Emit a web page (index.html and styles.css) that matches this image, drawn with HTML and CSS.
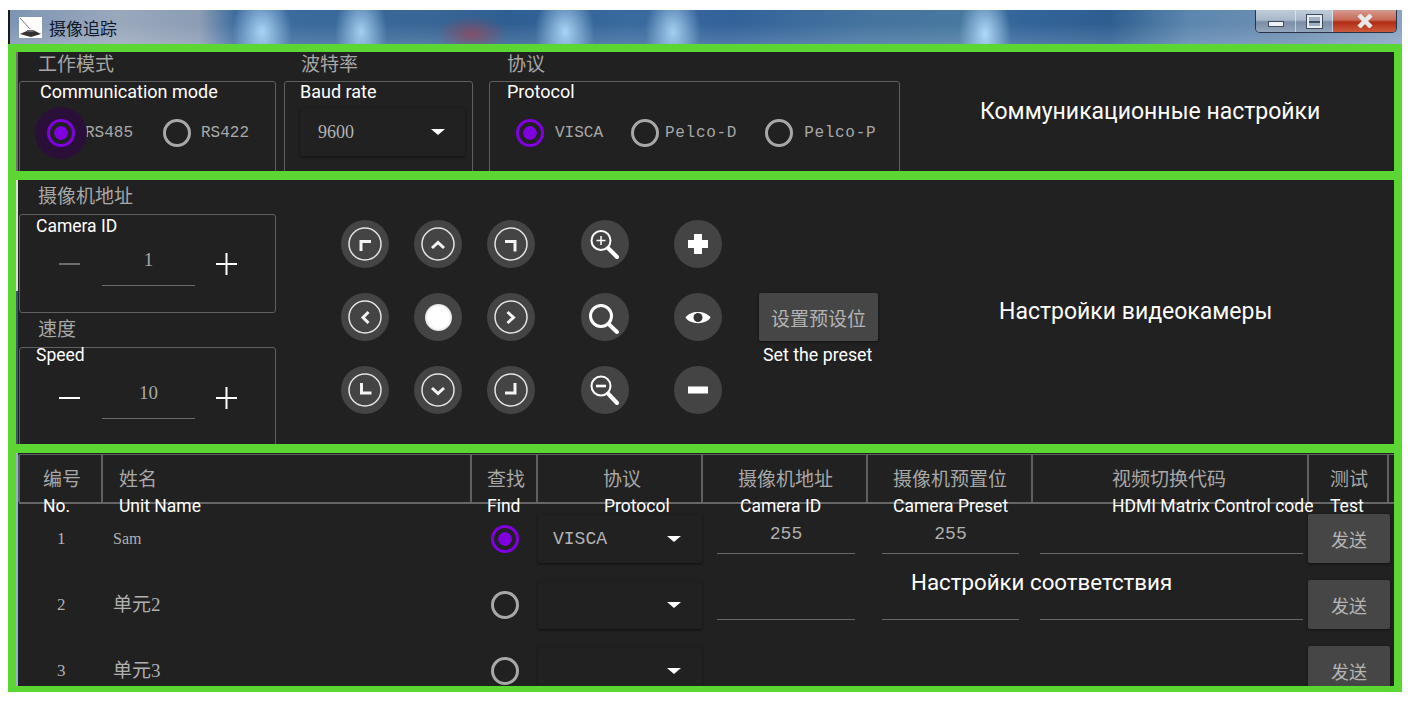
FILE: index.html
```html
<!DOCTYPE html>
<html lang="zh">
<head>
  <meta charset="UTF-8">
  <meta name="viewport" content="width=device-width, initial-scale=1.0">
  <title>摄像追踪</title>
  <link rel="stylesheet" href="styles.css">
</head>
<body>
  <div class="window">
    <div class="titlebar">
      <div class="app-icon">
        <svg width="23" height="21" viewBox="0 0 23 21">
          <path d="M1 1 L11 12" stroke="#777" stroke-width="1" fill="none"/>
          <path d="M1 17 L10 13 L14 13 L22 17 L12 20 Z" fill="#333"/>
          <path d="M8 13 L15 13 L15 15 L8 15 Z" fill="#666"/>
        </svg>
      </div>
      <span class="app-title">摄像追踪</span>
      <div class="win-btns">
        <div class="win-btn win-min"><i></i></div>
        <div class="win-btn win-max"><i></i></div>
        <div class="win-btn win-close">
          <svg width="26" height="14" viewBox="0 0 26 14"><path d="M7 1 L19 13 M19 1 L7 13" stroke="#e8e8e8" stroke-width="4.5" fill="none"/></svg>
        </div>
      </div>
    </div>

    <div class="frame">
      <!-- communication -->
      <section class="panel panel-comm">
        <div class="group group-mode">
          <div class="group-label">工作模式</div>
          <div class="box">
            <div class="caption">Communication mode</div>
            <div class="radios">
              <span class="radio on halo"></span><span class="radio-text text-485">RS485</span>
              <span class="radio"></span><span class="radio-text">RS422</span>
            </div>
          </div>
        </div>
        <div class="group group-baud">
          <div class="group-label">波特率</div>
          <div class="box">
            <div class="caption">Baud rate</div>
            <div class="select select-baud"><span>9600</span><i class="caret"></i></div>
          </div>
        </div>
        <div class="group group-proto">
          <div class="group-label">协议</div>
          <div class="box">
            <div class="caption">Protocol</div>
            <div class="radios radios-proto">
              <span class="radio on"></span><span class="radio-text text-visca">VISCA</span>
              <span class="radio"></span><span class="radio-text text-pelco-d">Pelco-D</span>
              <span class="radio"></span><span class="radio-text text-pelco-p">Pelco-P</span>
            </div>
          </div>
        </div>
        <div class="note note-comm">Коммуникационные настройки</div>
      </section>

      <!-- camera -->
      <section class="panel panel-cam">
        <div class="cam-left">
          <div class="group-label">摄像机地址</div>
          <div class="box box-step">
            <div class="caption">Camera ID</div>
            <div class="stepper">
              <svg class="step-icon" width="22" height="22" viewBox="0 0 22 22"><path d="M0 11 H21" stroke="#6e6e6e" stroke-width="2"/></svg>
              <div class="step-value">1</div>
              <svg class="step-icon" width="22" height="22" viewBox="0 0 22 22"><path d="M0 11 H21 M10.5 0 V22" stroke="#fff" stroke-width="2"/></svg>
            </div>
          </div>
          <div class="group-label label-speed">速度</div>
          <div class="box box-step box-open">
            <div class="caption caption-speed">Speed</div>
            <div class="stepper">
              <svg class="step-icon" width="22" height="22" viewBox="0 0 22 22"><path d="M0 11 H21" stroke="#fff" stroke-width="2"/></svg>
              <div class="step-value">10</div>
              <svg class="step-icon" width="22" height="22" viewBox="0 0 22 22"><path d="M0 11 H21 M10.5 0 V22" stroke="#fff" stroke-width="2"/></svg>
            </div>
          </div>
        </div>

        <div class="pad">
          <div class="pad-btn"><svg viewBox="0 0 48 48"><circle class="ring" cx="24" cy="24" r="16"/><path class="arrow" d="M20 31 V21.5 H30"/></svg></div>
          <div class="pad-btn"><svg viewBox="0 0 48 48"><circle class="ring" cx="24" cy="24" r="16"/><path class="arrow" d="M18 28 L24 22.5 L30 28"/></svg></div>
          <div class="pad-btn"><svg viewBox="0 0 48 48"><circle class="ring" cx="24" cy="24" r="16"/><path class="arrow" d="M18 21.5 H28 V31.5"/></svg></div>
          <div class="pad-btn"><svg viewBox="0 0 48 48"><circle cx="20" cy="20.5" r="9.5" class="lens"/><path class="lens-thin" d="M15.5 20.5 H24.5 M20 16 V25"/><path class="handle" d="M27 28 L36 37"/></svg></div>
          <div class="pad-btn"><svg viewBox="0 0 48 48"><path fill="#fff" d="M20 14 H28 V20 H34 V28 H28 V34 H20 V28 H14 V20 H20 Z"/></svg></div>

          <div class="pad-btn"><svg viewBox="0 0 48 48"><circle class="ring" cx="24" cy="24" r="16"/><path class="arrow" d="M27.5 19 L22 24.5 L27.5 30"/></svg></div>
          <div class="pad-btn"><div class="home-dot"></div></div>
          <div class="pad-btn"><svg viewBox="0 0 48 48"><circle class="ring" cx="24" cy="24" r="16"/><path class="arrow" d="M20.5 19 L26.5 24.5 L20.5 30"/></svg></div>
          <div class="pad-btn"><svg viewBox="0 0 48 48"><circle cx="20" cy="23" r="10.5" class="lens lens-bold"/><path class="handle" d="M27.5 31 L36 39"/></svg></div>
          <div class="pad-btn"><svg viewBox="0 0 48 48"><path fill="#fff" d="M11.5 24.5 C16 17 32 17 36.5 24.5 C32 32 16 32 11.5 24.5 Z"/><circle cx="24" cy="24.5" r="4.5" fill="#333"/></svg></div>

          <div class="pad-btn"><svg viewBox="0 0 48 48"><circle class="ring" cx="24" cy="24" r="16"/><path class="arrow" d="M20.5 17 V27 H30.5"/></svg></div>
          <div class="pad-btn"><svg viewBox="0 0 48 48"><circle class="ring" cx="24" cy="24" r="16"/><path class="arrow" d="M18 22 L24 27.5 L30 22"/></svg></div>
          <div class="pad-btn"><svg viewBox="0 0 48 48"><circle class="ring" cx="24" cy="24" r="16"/><path class="arrow" d="M28 17 V27 H18"/></svg></div>
          <div class="pad-btn"><svg viewBox="0 0 48 48"><circle cx="20" cy="20" r="9.5" class="lens"/><path class="lens-bar" d="M15 20 H25"/><path class="handle" d="M27 27.5 L36 37"/></svg></div>
          <div class="pad-btn"><svg viewBox="0 0 48 48"><rect x="14" y="20.5" width="20" height="7" fill="#fff"/></svg></div>
        </div>

        <div class="preset">
          <div class="btn preset-btn">设置预设位</div>
          <div class="preset-text">Set the preset</div>
        </div>
        <div class="note note-cam">Настройки видеокамеры</div>
      </section>

      <!-- matching table -->
      <section class="panel panel-map">
        <div class="grid head">
          <div class="th th-no"><b>编号</b><span>No.</span></div>
          <div class="th th-name"><b>姓名</b><span>Unit Name</span></div>
          <div class="th th-find"><b>查找</b><span>Find</span></div>
          <div class="th th-proto"><b>协议</b><span>Protocol</span></div>
          <div class="th th-id"><b>摄像机地址</b><span>Camera ID</span></div>
          <div class="th th-preset"><b>摄像机预置位</b><span>Camera Preset</span></div>
          <div class="th th-hdmi"><b>视频切换代码</b><span>HDMI Matrix Control code</span></div>
          <div class="th th-test"><b>测试</b><span>Test</span></div>
        </div>

        <div class="grid row">
          <div class="td td-no">1</div>
          <div class="td td-name">Sam</div>
          <div class="td td-find"><span class="radio on"></span></div>
          <div class="td"><div class="select select-row"><span>VISCA</span><i class="caret"></i></div></div>
          <div class="td"><div class="field field-id">255</div></div>
          <div class="td"><div class="field field-preset">255</div></div>
          <div class="td"><div class="field field-hdmi"></div></div>
          <div class="td"><div class="btn send-btn">发送</div></div>
        </div>
        <div class="grid row">
          <div class="td td-no">2</div>
          <div class="td td-name td-name-cn">单元2</div>
          <div class="td td-find"><span class="radio"></span></div>
          <div class="td"><div class="select select-row"><span></span><i class="caret"></i></div></div>
          <div class="td"><div class="field field-id"></div></div>
          <div class="td"><div class="field field-preset"></div></div>
          <div class="td"><div class="field field-hdmi"></div></div>
          <div class="td"><div class="btn send-btn">发送</div></div>
        </div>
        <div class="grid row">
          <div class="td td-no">3</div>
          <div class="td td-name td-name-cn">单元3</div>
          <div class="td td-find"><span class="radio"></span></div>
          <div class="td"><div class="select select-row"><span></span><i class="caret"></i></div></div>
          <div class="td"></div>
          <div class="td"></div>
          <div class="td"></div>
          <div class="td"><div class="btn send-btn">发送</div></div>
        </div>

        <div class="note note-map">Настройки соответствия</div>
      </section>
    </div>
  </div>
</body>
</html>
```

FILE: styles.css
```css
*{
  margin: 0px;
  padding: 0px;
  box-sizing: border-box;
}
body{
  background: #fff;
  font-family: "Roboto", "Noto Sans CJK SC", sans-serif;
  overflow: hidden;
}
.window{
  width: 1394px;
  margin: 10px 0 0 8px;
}

/* title bar */
.titlebar{
  height: 34px;
  display: flex;
  align-items: center;
  position: relative;
  border-left: 2px solid #1a1a1a;
  padding-left: 9px;
  background:
    radial-gradient(ellipse 30px 42px at 252px 22px, #a9d3f5 0%, rgba(169,211,245,0) 100%),
    radial-gradient(ellipse 26px 42px at 351px 22px, #a5cff0 0%, rgba(165,207,240,0) 100%),
    radial-gradient(ellipse 36px 18px at 462px 24px, rgba(170,60,70,.6) 0%, rgba(170,60,70,0) 100%),
    radial-gradient(ellipse 30px 42px at 555px 22px, #a9d3f5 0%, rgba(169,211,245,0) 100%),
    radial-gradient(ellipse 28px 42px at 663px 22px, #a5cff0 0%, rgba(165,207,240,0) 100%),
    radial-gradient(ellipse 26px 44px at 975px 24px, #b0d8f8 0%, rgba(176,216,248,0) 100%),
    linear-gradient(180deg, rgba(255,255,255,0) 40%, rgba(255,255,255,.14) 100%),
    linear-gradient(90deg, #7d95b3 0px, #9aa8bc 110px, #8b9cb4 190px, #3f6d9f 225px, #3a6a9c 300px, #386696 420px, #2f5f92 500px, #3a6b9e 620px, #33629a 720px, #44739f 850px, #48789f 950px, #34659a 1010px, #2e5e90 1100px, #5d87af 1180px, #6f90b3 1290px, #8ba4c2 1394px);
}
.app-icon{
  width: 23px;
  height: 21px;
  background: #fff;
  display: flex;
}
.app-title{
  margin-left: 7px;
  font-size: 17px;
  color: #10182a;
}
.win-btns{
  position: absolute;
  top: 0;
  right: 5px;
  width: 142px;
  height: 23px;
  display: flex;
  border: 1px solid #2a3345;
  border-top: none;
  border-radius: 0 0 5px 5px;
  overflow: hidden;
}
.win-btn{
  display: flex;
  align-items: center;
  justify-content: center;
  border-right: 1px solid rgba(255,255,255,.5);
  background: linear-gradient(180deg, #c0ccd9 0%, #a9b8cb 45%, #7c8ea5 55%, #93a5ba 100%);
}
.win-min{
  width: 40px;
}
.win-min i{
  display: block;
  width: 16px;
  height: 6px;
  margin-top: 6px;
  background: #eef1f5;
  border: 1px solid #3d4a5c;
}
.win-max{
  width: 37px;
}
.win-max i{
  display: block;
  width: 15px;
  height: 13px;
  border: 2px solid #e8ecf1;
  outline: 1px solid #3d4a5c;
  background: linear-gradient(180deg, #9fb0c4 0 4px, #3d4a5c 4px 6px, #9fb0c4 6px);
}
.win-close{
  flex: 1;
  border-right: none;
  background: linear-gradient(180deg, #d69a8e 0%, #c76a58 45%, #b02c12 55%, #cc5b3d 100%);
}

/* green frame round the panels */
.frame{
  background: #5cd632;
  padding: 8px 8px 6px;
  height: 648px;
  display: flex;
  flex-direction: column;
  gap: 9px;
}
.panel{
  background: #212121;
  overflow: hidden;
  position: relative;
  color: #fff;
}
.panel-comm{
  height: 119px;
  display: flex;
  padding-left: 3px;
  box-shadow: inset 2px 0 0 #6f6f6f;
}
.panel-cam{
  height: 264px;
  display: flex;
  padding-left: 3px;
  background: #212121 linear-gradient(180deg, #dcdcdc 111px, #35586c 111px) no-repeat 0 0 / 2px 100%;
}
.panel-map{
  height: 233px;
  padding-left: 3px;
  box-shadow: inset 2px 0 0 #8fb4cc;
}

/* groups */
.group-label{
  height: 29px;
  line-height: 25px;
  padding-left: 19px;
  font-size: 19px;
  color: #a8a8a8;
}
.box{
  height: 99px;
  border: 1px solid #606060;
  border-radius: 3px;
}
.caption{
  height: 20px;
  line-height: 20px;
  padding-left: 20px;
  font-size: 18px;
  color: #fff;
}
.group-mode{
  width: 257px;
  margin-right: 8px;
}
.group-baud{
  width: 189px;
  margin-right: 16px;
}
.group-baud .group-label{
  padding-left: 17px;
}
.group-baud .caption{
  padding-left: 15px;
}
.group-proto{
  width: 411px;
}
.group-proto .group-label{
  padding-left: 18px;
}
.group-proto .caption{
  padding-left: 17px;
}

/* radios */
.radios{
  display: flex;
  align-items: center;
  height: 42px;
  margin-top: 10px;
  padding-left: 27px;
}
.radio{
  display: block;
  width: 28px;
  height: 28px;
  border: 3px solid #a8a8a8;
  border-radius: 50%;
  flex: none;
  position: relative;
  background: transparent;
}
.radio.on{
  border-color: #8000e0;
  background: radial-gradient(circle, #8000e0 0 6.5px, transparent 7px);
}
.halo{
  box-shadow: 0 0 0 12px #2a1038;
}
.radio-text{
  font-family: "Liberation Mono", "Noto Sans CJK SC", monospace;
  font-size: 16px;
  color: #a8a8a8;
  margin-left: 10px;
}
.text-485{
  margin-right: 30px;
}
.radios-proto{
  padding-left: 26px;
}
.radios-proto .radio-text{
  margin-left: 11px;
}
.text-visca{
  margin-right: 28px;
}
.radios-proto .text-pelco-d{
  margin-left: 6px;
  margin-right: 28px;
  letter-spacing: 0.7px;
}
.text-pelco-p{
  letter-spacing: 0.7px;
}

/* selects */
.select{
  display: flex;
  align-items: center;
  justify-content: space-between;
  background: #212121;
  box-shadow: 0 1px 3px rgba(0,0,0,.55);
  border-radius: 2px;
}
.select span{
  font-family: "Liberation Mono", "Noto Sans CJK SC", monospace;
  color: #b4b4b4;
}
.caret{
  display: block;
  width: 0;
  height: 0;
  border-left: 7px solid transparent;
  border-right: 7px solid transparent;
  border-top: 6px solid #fff;
}
.select-baud{
  width: 165px;
  height: 48px;
  margin: 6px 0 0 15px;
  padding: 0 20px 0 18px;
}
.select-baud span{
  font-size: 18px;
  font-family: "Liberation Serif", serif;
}
.select-row{
  width: 164px;
  height: 48px;
  margin: 9px 0 0 1px;
  padding: 0 21px 0 15px;
}
.select-row span{
  font-size: 18px;
}

/* notes */
.note{
  font-size: 23px;
  color: #fff;
  white-space: nowrap;
}
.note-comm{
  margin: 46px 0 0 80px;
}
.note-cam{
  margin: 118px 0 0 121px;
}
.note-map{
  position: absolute;
  left: 895px;
  top: 116px;
  font-size: 22.3px;
}

/* camera panel */
.cam-left{
  width: 257px;
}
.cam-left .group-label{
  height: 34px;
  line-height: 34px;
}
.box-step .caption{
  padding-left: 16px;
  font-size: 17.5px;
}
.box-step > .caption:not(.caption-speed){
  padding-top: 1px;
}
.box-open{
  height: 110px;
}
.caption-speed{
  height: 16px;
  line-height: 14px;
}
.stepper{
  display: flex;
  align-items: flex-start;
  margin-top: 8px;
  padding-left: 39px;
}
.box-open .stepper{
  margin-top: 16px;
}
.step-icon{
  flex: none;
  margin-top: 10px;
}
.box-open .step-icon{
  margin-top: 7px;
}
.step-value{
  width: 93px;
  height: 43px;
  margin: 0 21px;
  border-bottom: 1px solid #6a6a6a;
  text-align: center;
  font-family: "Liberation Serif", serif;
  font-size: 19px;
  line-height: 34px;
  color: #a8a8a8;
}
.box-open .step-value{
  height: 39px;
  line-height: 26px;
}
.pad{
  display: grid;
  grid-template-columns: 48px 48px 48px 69px 68px;
  grid-auto-rows: 48px;
  gap: 25px;
  justify-items: end;
  margin: 40px 0 0 65px;
  align-self: flex-start;
}
.pad-btn{
  width: 48px;
  height: 48px;
  border-radius: 50%;
  background: #444;
  display: flex;
  align-items: center;
  justify-content: center;
}
.pad-btn svg{
  width: 48px;
  height: 48px;
  fill: none;
}
.ring{
  stroke: #e4e4e4;
  stroke-width: 1.5;
}
.arrow{
  stroke: #f4f4f4;
  stroke-width: 3;
  fill: none;
}
.lens{
  stroke: #fff;
  stroke-width: 2;
  fill: none;
}
.lens-bold{
  stroke-width: 3;
}
.lens-thin{
  stroke: #fff;
  stroke-width: 1.5;
}
.lens-bar{
  stroke: #fff;
  stroke-width: 2.6;
}
.handle{
  stroke: #fff;
  stroke-width: 4;
  stroke-linecap: round;
}
.home-dot{
  width: 27px;
  height: 27px;
  border-radius: 50%;
  background: radial-gradient(circle, #fff 0 55%, #d0d0d0 80%, rgba(150,150,150,.35) 100%);
}
.preset{
  margin: 113px 0 0 37px;
  width: 119px;
  flex: none;
}
.btn{
  background: #464646;
  color: #b4b4b4;
  display: flex;
  align-items: center;
  justify-content: center;
  border-radius: 2px;
  font-size: 18px;
}
.preset-btn{
  height: 48px;
  font-size: 19px;
  box-shadow: 0 1px 3px rgba(0,0,0,.5);
}
.preset-text{
  margin-top: 4px;
  padding-left: 4px;
  font-size: 17.8px;
  line-height: 20px;
  white-space: nowrap;
}

/* table */
.grid{
  display: grid;
  grid-template-columns: 83px 369px 66px 165px 165px 165px 276px 81px;
}
.head{
  height: 50px;
  grid-template-rows: 47px;
  margin-top: 1px;
  border-top: 1px solid #606060;
  border-bottom: 2px solid #666;
}
.th{
  height: 47px;
  margin-left: -1px;
  border-left: 2px solid #606060;
  position: relative;
  white-space: nowrap;
}
.th-test{
  border-right: 2px solid #606060;
}
.th b{
  display: block;
  height: 33px;
  padding-top: 14px;
  font-weight: 400;
  font-size: 19px;
  line-height: 22px;
  color: #a8a8a8;
}
.th span{
  display: block;
  margin-top: 8px;
  font-size: 17.5px;
  line-height: 20px;
  color: #fff;
}
.th-no{
  padding-left: 23px;
}
.th-name{
  padding-left: 16px;
}
.th-find{
  padding-left: 15px;
}
.th-proto b{
  padding-left: 65px;
}
.th-proto span{
  padding-left: 66px;
}
.th-id{
  padding-left: 35px;
}
.th-id span{
  padding-left: 2px;
}
.th-preset{
  padding-left: 25px;
}
.th-hdmi{
  padding-left: 79px;
}
.th-test{
  padding-left: 21px;
}
.row{
  height: 66px;
}
.row:nth-child(2){
  margin-top: 2px;
}
.td{
  height: 66px;
}
.td-no{
  padding: 23px 0 0 38px;
  font-family: "Liberation Serif", serif;
  font-size: 17px;
  line-height: 20px;
  color: #b0b0b0;
}
.td-name{
  padding: 23px 0 0 11px;
  font-family: "Liberation Serif", "Noto Sans CJK SC", serif;
  font-size: 16px;
  line-height: 20px;
  color: #b0b0b0;
}
.td-name-cn{
  font-size: 19px;
}
.td-find{
  padding: 19px 0 0 20px;
}
.field{
  height: 48px;
  border-bottom: 1px solid #666;
  font-family: "Liberation Mono", monospace;
  font-size: 18px;
  line-height: 56px;
  color: #b0b0b0;
  text-align: center;
}
.field-id{
  margin-left: 15px;
  margin-right: 12px;
}
.field-preset{
  margin-left: 15px;
  margin-right: 13px;
}
.field-hdmi{
  margin-left: 8px;
  margin-right: 5px;
}
.send-btn{
  width: 82px;
  height: 49px;
  margin-top: 8px;
  box-shadow: 0 1px 3px rgba(0,0,0,.5);
}
```
